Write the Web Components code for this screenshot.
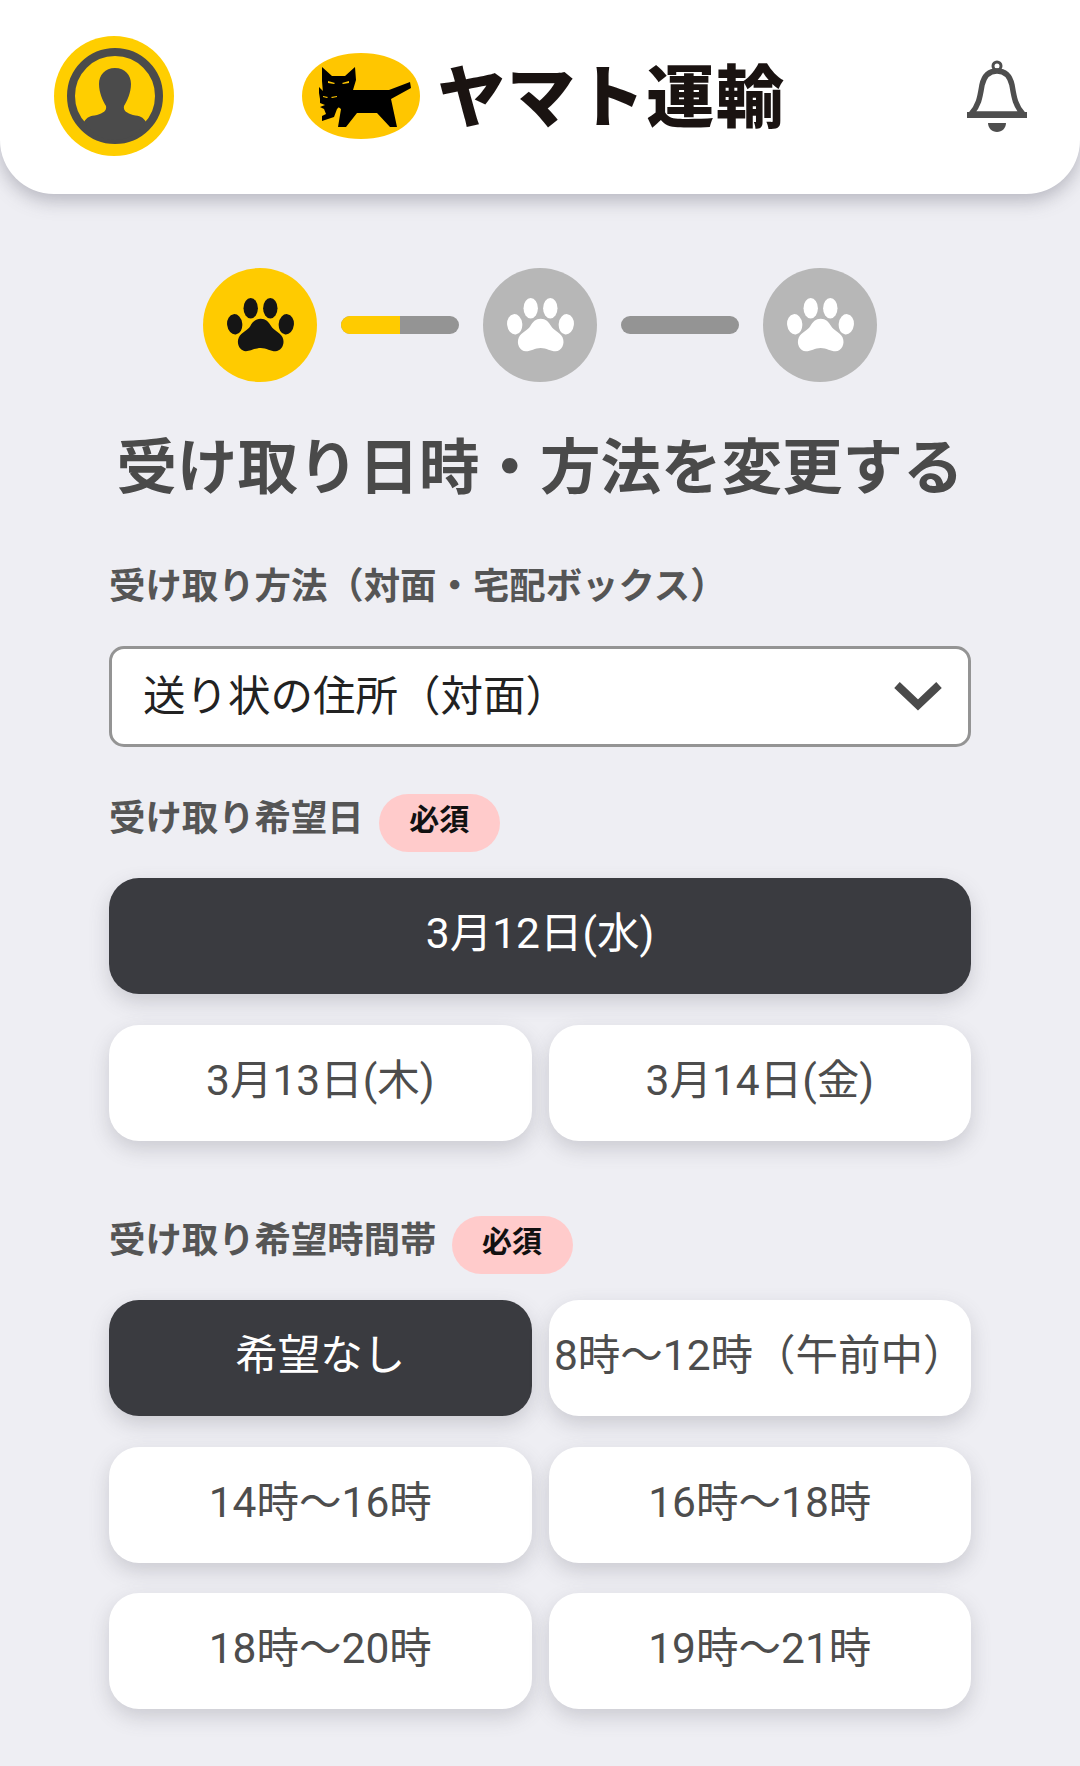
<!DOCTYPE html>
<html lang="ja">
<head>
<meta charset="utf-8">
<title>ヤマト運輸</title>
<style>
  html, body { margin: 0; padding: 0; background: #eeeef3; }
  html { height: 1766px; overflow: hidden; }
  body {
    width: 1080px;
    height: 1766px;
    overflow: hidden;
    font-family: Roboto, "Noto Sans CJK JP", sans-serif;
    color: #4a4a4a;
  }
</style>
</head>
<body>
<app-header></app-header>
<main-form>
  <step-bar></step-bar>
  <page-title>受け取り日時・方法を変更する</page-title>

  <field-label class="method">受け取り方法（対面・宅配ボックス）</field-label>
  <select-box>送り状の住所（対面）</select-box>

  <field-label required class="date">受け取り希望日</field-label>
  <option-grid>
    <option-button wide selected>3月12日(水)</option-button>
    <option-button>3月13日(木)</option-button>
    <option-button>3月14日(金)</option-button>
  </option-grid>

  <field-label required class="time">受け取り希望時間帯</field-label>
  <option-grid>
    <option-button selected>希望なし</option-button>
    <option-button>8時～12時（午前中）</option-button>
    <option-button>14時～16時</option-button>
    <option-button>16時～18時</option-button>
    <option-button>18時～20時</option-button>
    <option-button>19時～21時</option-button>
  </option-grid>
</main-form>

<script>
class AppHeader extends HTMLElement {
  constructor () {
    super()
    this.shadow = this.attachShadow({ mode: 'open' })
  }

  connectedCallback () {
    this.shadow.innerHTML =
      /* html */`
      <style>
        :host {
          display: grid;
          grid-template-columns: 1fr auto 1fr;
          align-items: center;
          height: 194px;
          padding: 0 53px 2px 54px;
          box-sizing: border-box;
          background: #fff;
          border-radius: 0 0 54px 54px;
          box-shadow: 0 7px 18px rgba(90, 90, 105, .36);
        }
        .logo { display: flex; align-items: center; gap: 17px; margin-left: 7px; }
        .name {
          font: 900 68px/1 "Noto Sans CJK JP", sans-serif;
          color: #1a1311;
          letter-spacing: 1.600px;
          white-space: nowrap;
          margin-bottom: 6px;
        }
        .bell { justify-self: end; }
        svg { display: block; flex: none; }
      </style>
      <svg width="120" height="120" viewBox="0 0 120 120">
        <circle cx="60" cy="60" r="60" fill="#ffce00"/>
        <circle cx="61" cy="60" r="44" fill="none" stroke="#4b4b4b" stroke-width="8"/>
        <path d="M61 32c-10 0-16 7-16 16 0 9 4 17 7 22 1 5-3 7-9 9-7 1-10 2-13 7 7 11 18 18 31 18s24-7 31-18c-3-5-6-6-13-7-6-2-10-4-9-9 3-5 7-13 7-22 0-9-6-16-16-16z" fill="#4b4b4b"/>
      </svg>
      <div class="logo">
        <svg width="118" height="86" viewBox="0 0 118 86">
          <path d="M59 0C92 0 118 17 118 43S92 86 59 86 0 69 0 43 26 0 59 0z" fill="#ffc600"/>
          <path d="M20 14l10 9h13l10-9 1 13-3 10h36l21-8 1 6-20 11 6 28h-7L75 60H55L44 74h-8l3-18-12-9-6-7-1-12z" fill="#000"/>
          <path d="M17 34l5 5 5-1 8 5 2 11-2 2-3 8-12 4v-5l4-2-2-5-4-2 5-2-5-2 0-4-1-6z" fill="#000"/>
          <path d="M26 28l7 2-1 1-6-1zM47 28l-7 2 1 1 6-1zM21 43l5 1-1 1-4-1zM35 43l-6 1 1 1 5-1z" fill="#ffc600"/>
        </svg>
        <span class="name">ヤマト運輸</span>
      </div>
      <svg class="bell" width="60" height="72" viewBox="0 0 60 72">
        <circle cx="30" cy="6" r="4" fill="none" stroke="#4e4e4e" stroke-width="3"/>
        <path d="M30 11c-8 0-13 5-15 14-2 12-3 20-11 29h52c-8-9-9-17-11-29-2-9-7-14-15-14z" fill="none" stroke="#4e4e4e" stroke-width="5.500"/>
        <rect y="52" width="60" height="6" fill="#4e4e4e"/>
        <path d="M21 63h18c0 5-4 9-9 9s-9-4-9-9z" fill="#4e4e4e"/>
      </svg>
      `
  }
}

// paw is used three times in the stepper
const PAW = /* html */`
  <svg width="67" height="54" viewBox="0 0 67 54">
    <ellipse cx="7.700" cy="26.300" rx="7.600" ry="10.200" transform="rotate(-6 7.700 26.300)"/>
    <ellipse cx="23.700" cy="10.200" rx="7.200" ry="10.200"/>
    <ellipse cx="43.300" cy="10.200" rx="7.200" ry="10.200"/>
    <ellipse cx="59.300" cy="26.300" rx="7.600" ry="10.200" transform="rotate(6 59.300 26.300)"/>
    <path d="M33.700 20.700c5 0 8 3 10.500 7.500 2.500 4 8.800 6 11.300 11 3 6.500-1 14-7 14-5 0-9-3.300-14.800-3.300s-9.800 3.300-14.800 3.300c-6 0-10-7.500-7-14 2.500-5 8.800-7 11.300-11 2.500-4.500 5.500-7.500 10.500-7.500z"/>
  </svg>`

class StepBar extends HTMLElement {
  constructor () {
    super()
    this.shadow = this.attachShadow({ mode: 'open' })
  }

  connectedCallback () {
    this.shadow.innerHTML =
      /* html */`
      <style>
        :host {
          display: flex;
          align-items: center;
          justify-content: center;
          gap: 24px;
          margin-top: 74px;
        }
        .dot {
          width: 114px;
          height: 114px;
          border-radius: 50%;
          background: #b7b7b7;
          fill: #fff;
          display: flex;
          align-items: center;
          justify-content: center;
        }
        .dot.on { background: #ffcb00; fill: #151515; }
        .bar {
          width: 118px;
          height: 18px;
          border-radius: 9px;
          background: #949494;
          overflow: hidden;
        }
        .bar i { display: block; width: 50%; height: 100%; background: #ffcb00; }
        svg { display: block; }
      </style>
      <div class="dot on">${PAW}</div>
      <div class="bar"><i></i></div>
      <div class="dot">${PAW}</div>
      <div class="bar"></div>
      <div class="dot">${PAW}</div>
      `
  }
}

class PageTitle extends HTMLElement {
  constructor () {
    super()
    this.shadow = this.attachShadow({ mode: 'open' })
  }

  connectedCallback () {
    this.shadow.innerHTML =
      /* html */`
      <style>
        :host {
          display: block;
          margin: 46px -50px 0;
          text-align: center;
          font: 700 60.500px/70px "Noto Sans CJK JP", sans-serif;
          color: #4a4a4a;
          white-space: nowrap;
        }
      </style>
      <slot></slot>
      `
  }
}

class FieldLabel extends HTMLElement {
  constructor () {
    super()
    this.shadow = this.attachShadow({ mode: 'open' })
  }

  connectedCallback () {
    const badge = this.hasAttribute('required') ? '<span class="badge">必須</span>' : ''
    this.shadow.innerHTML =
      /* html */`
      <style>
        :host {
          display: flex;
          align-items: center;
          gap: 15px;
          height: 58.500px;
          font: 700 36.400px/58.500px "Noto Sans CJK JP", sans-serif;
          color: #555;
          white-space: nowrap;
        }
        /* the text sits higher than the badge in the reference */
        :host([required]) .text { margin-top: -16px; }
        .badge {
          width: 121px;
          height: 58.500px;
          padding-bottom: 11px;
          box-sizing: border-box;
          border-radius: 30px;
          background: #ffcbcb;
          color: #111;
          font-size: 30px;
          line-height: 47.500px;
          text-align: center;
        }
      </style>
      <span class="text"><slot></slot></span>${badge}
      `
  }
}

class SelectBox extends HTMLElement {
  constructor () {
    super()
    this.shadow = this.attachShadow({ mode: 'open' })
  }

  connectedCallback () {
    this.shadow.innerHTML =
      /* html */`
      <style>
        :host {
          display: flex;
          align-items: center;
          justify-content: space-between;
          height: 101px;
          margin-top: 33px;
          padding: 0 26px 0 31px;
          box-sizing: border-box;
          background: #fff;
          border: 3px solid #949494;
          border-radius: 15px;
          font: 400 42.500px/1 "Noto Sans CJK JP", sans-serif;
          color: #222;
          white-space: nowrap;
        }
        .text { margin-bottom: 6px; }
        svg { display: block; }
      </style>
      <span class="text"><slot></slot></span>
      <svg width="48" height="32" viewBox="0 0 48 32">
        <path d="M3 5l21 20L45 5" fill="none" stroke="#4a4a4a" stroke-width="8"/>
      </svg>
      `
  }
}

class OptionGrid extends HTMLElement {
  constructor () {
    super()
    this.shadow = this.attachShadow({ mode: 'open' })
  }

  connectedCallback () {
    this.shadow.innerHTML =
      /* html */`
      <style>
        :host {
          display: grid;
          grid-template-columns: 1fr 1fr;
          column-gap: 17px;
          row-gap: 30.500px;
          margin-top: 26px;
        }
      </style>
      <slot></slot>
      `
  }
}

class OptionButton extends HTMLElement {
  constructor () {
    super()
    this.shadow = this.attachShadow({ mode: 'open' })
  }

  connectedCallback () {
    this.shadow.innerHTML =
      /* html */`
      <style>
        :host {
          display: flex;
          align-items: center;
          justify-content: center;
          height: 116px;
          padding-bottom: 3px;
          box-sizing: border-box;
          min-width: 0;
          border-radius: 30px;
          background: #fff;
          color: #4d4d4d;
          font: 400 42.500px/1 Roboto, "Noto Sans CJK JP", sans-serif;
          white-space: nowrap;
          box-shadow: 0 8px 20px rgba(90, 90, 105, .24);
        }
        :host([wide]) { grid-column: 1 / -1; }
        :host([selected]) { background: #3a3b40; color: #fff; }
      </style>
      <slot></slot>
      `
  }
}

class MainForm extends HTMLElement {
  constructor () {
    super()
    this.shadow = this.attachShadow({ mode: 'open' })
  }

  connectedCallback () {
    this.shadow.innerHTML =
      /* html */`
      <style>
        :host { display: block; padding: 0 109px; }
        ::slotted(.method) { margin-top: 56px; }
        ::slotted(.date) { margin-top: 47px; }
        ::slotted(.time) { margin-top: 75px; }
      </style>
      <slot></slot>
      `
  }
}

customElements.define('app-header', AppHeader)
customElements.define('step-bar', StepBar)
customElements.define('page-title', PageTitle)
customElements.define('field-label', FieldLabel)
customElements.define('select-box', SelectBox)
customElements.define('option-grid', OptionGrid)
customElements.define('option-button', OptionButton)
customElements.define('main-form', MainForm)
</script>
</body>
</html>
